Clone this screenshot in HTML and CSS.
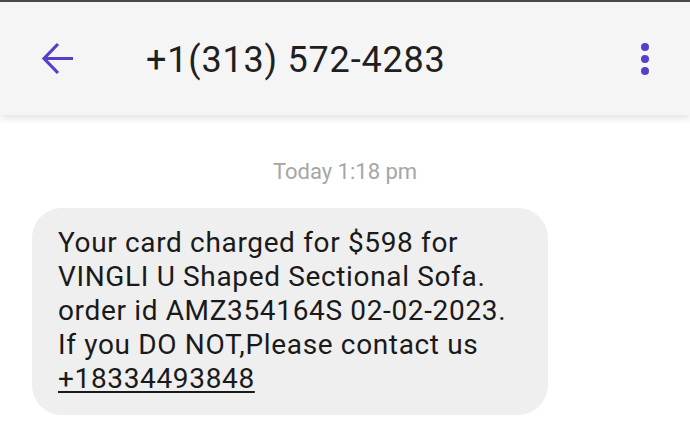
FILE: index.html
```html
<!DOCTYPE html>
<html>
<head>
<meta charset="utf-8">
<link rel="stylesheet" href="styles.css">
</head>
<body>
<div class="topline"></div>
<header class="appbar">
  <svg class="back" width="34" height="34" viewBox="0 0 34 34">
    <path d="M32 16.5H3.5M17 2L3 16.5L17 31" fill="none" stroke="#5a3ec8" stroke-width="3.2" stroke-linejoin="miter"/>
  </svg>
  <h1 class="title">+1(313) 572-4283</h1>
  <svg class="more" width="10" height="34" viewBox="0 0 10 34">
    <circle cx="5" cy="5" r="4" fill="#5a3ec8"/>
    <circle cx="5" cy="17" r="4" fill="#5a3ec8"/>
    <circle cx="5" cy="29" r="4" fill="#5a3ec8"/>
  </svg>
</header>
<main class="thread">
  <div class="stamp">Today 1:18 pm</div>
  <div class="bubble">Your card charged for $598 for<br>VINGLI U Shaped Sectional Sofa.<br>order id AMZ354164S 02-02-2023.<br>If you DO NOT,Please contact us<br><a class="phone">+18334493848</a></div>
</main>
</body>
</html>
```
FILE: styles.css
```css
* { box-sizing: border-box; }
html, body { margin: 0; padding: 0; }
body {
  width: 690px;
  height: 436px;
  overflow: hidden;
  background: #ffffff;
  font-family: Roboto, "Liberation Sans", sans-serif;
}
.topline {
  height: 2px;
  background: #4a4a4a;
}
.appbar {
  height: 113px;
  background: #f5f5f5;
  display: flex;
  align-items: center;
  padding-left: 41px;
  box-shadow: 0 3px 8px rgba(0,0,0,0.12);
  position: relative;
  z-index: 1;
}
.back { flex: none; }
.title {
  margin: 2px 0 0 71px;
  font-size: 36px;
  font-weight: 400;
  color: #1f1f1f;
  letter-spacing: 0.8px;
  flex: 1;
}
.more { flex: none; margin-right: 40px; }
.thread {
  display: flex;
  flex-direction: column;
  align-items: flex-start;
  padding-top: 44px;
}
.stamp {
  align-self: center;
  font-size: 22px;
  color: #a6a6a6;
  line-height: 26px;
}
.bubble {
  margin: 23px 0 0 32px;
  width: 516px;
  height: 207px;
  background: #efefef;
  border-radius: 30px;
  padding: 18px 10px 0 26px;
  font-size: 28px;
  line-height: 34.1px;
  letter-spacing: 0.65px;
  color: #1a1a1a;
  white-space: nowrap;
}
.phone {
  text-decoration: underline;
  text-underline-offset: 3px;
  color: #1a1a1a;
}
```
